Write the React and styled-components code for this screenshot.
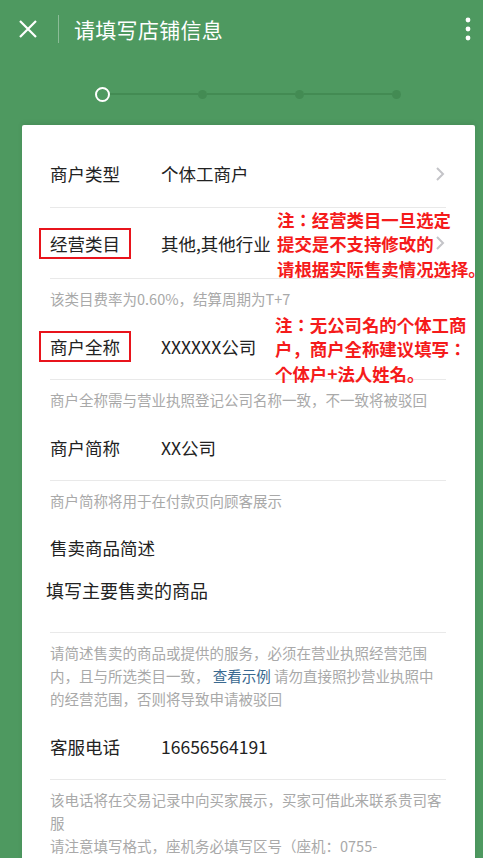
import styled, { createGlobalStyle } from "styled-components";

const GlobalStyle = createGlobalStyle`
    *, *::before, *::after {
        box-sizing: border-box;
    }
    html, body {
        margin: 0;
        padding: 0;
        height: 858px;
        overflow: hidden;
        background: #4e9960;
    }
    body {
        font-family: "Noto Sans CJK SC", "Noto Sans", sans-serif;
    }
`

const Page = styled.div`
    width: 483px;
    min-height: 858px;
    background: #4e9960;
`

const Header = styled.header`
    display: flex;
    align-items: center;
    height: 58px;
    padding: 0 12px 0 18px;
    color: #fff;
`

const IconButton = styled.div`
    display: flex;
    align-items: center;
    justify-content: center;
`

const Divider = styled.div`
    width: 1px;
    height: 28px;
    margin: 0 15px 0 20px;
    background: rgba(255, 255, 255, 0.35);
`

const Title = styled.h1`
    flex: 1;
    margin: 0;
    font-size: 21px;
    font-weight: 400;
    letter-spacing: 0.3px;
`

const Stepper = styled.div`
    display: flex;
    align-items: center;
    width: 306px;
    height: 16px;
    margin: 28px 0 23px 95px;
`

const StepDot = styled.span`
    flex: none;
    border-radius: 50%;
    width: ${p => (p.$active ? "15px" : "9px")};
    height: ${p => (p.$active ? "15px" : "9px")};
    border: ${p => (p.$active ? "2.5px solid #fff" : "none")};
    background: ${p => (p.$active ? "#4e9960" : "#438b53")};
`

const StepLine = styled.span`
    flex: 1;
    height: 2px;
    background: #438b53;
`

const Card = styled.main`
    margin: 0 8px 0 22px;
    padding: 15px 29px 0 28px;
    background: #fff;
    border-radius: 2px 2px 0 0;
    box-shadow: 0 -2px 5px rgba(0, 0, 0, 0.08);
`

const Row = styled.div`
    position: relative;
    display: grid;
    grid-template-columns: 111px 1fr auto;
    align-items: center;
    height: ${p => p.$h || 67}px;
    border-bottom: 1px solid #e9e9e9;
    font-size: 17.5px;
    color: #222;
`

const Label = styled.span`
    justify-self: start;
    line-height: 25px;
    ${p => p.$boxed && `
        border: 2px solid #e8141c;
        padding: 1px 9px;
        margin-left: -11px;
    `}
`

const Value = styled.span`
    line-height: 25px;
`

const Chevron = styled.svg`
    margin-right: 1px;
`

const Hint = styled.p`
    margin: 0;
    padding: 8px 0 3px;
    font-size: 14.5px;
    line-height: 23px;
    color: #a9a9a9;
`

const Link = styled.span`
    color: #3a6990;
`

const Note = styled.div`
    position: absolute;
    top: 0;
    left: ${p => p.$left}px;
    font-family: "Noto Sans CJK JP", "Noto Sans CJK SC", sans-serif;
    font-size: 17.4px;
    line-height: 24.3px;
    font-weight: 700;
    color: #f51b1b;
    white-space: nowrap;
`

const SectionTitle = styled.div`
    padding-top: 21px;
    font-size: 17.5px;
    line-height: 24px;
    color: #222;
`

const Field = styled.div`
    height: 73px;
    padding-top: 17px;
    border-bottom: 1px solid #e9e9e9;
`

const Textarea = styled.textarea`
    display: block;
    width: calc(100% + 4px);
    height: 55px;
    margin: 0 0 0 -4px;
    padding: 0;
    border: none;
    outline: none;
    resize: none;
    font-family: inherit;
    font-size: 18px;
    line-height: 26px;
    color: #222;

    &::placeholder {
        color: #222;
    }
`

const ArrowRight = () => (
    <Chevron width="10" height="16" viewBox="0 0 10 16">
        <polyline points="2,2 8,8 2,14" fill="none" stroke="#c4c4c8" strokeWidth="2" />
    </Chevron>
)

const App = () => {
    return (
        <Page>
            <GlobalStyle />
            <Header>
                <IconButton>
                    <svg width="20" height="20" viewBox="0 0 20 20">
                        <path d="M2 2 L18 18 M18 2 L2 18" stroke="#fff" strokeWidth="2.2" />
                    </svg>
                </IconButton>
                <Divider />
                <Title>请填写店铺信息</Title>
                <IconButton>
                    <svg width="6" height="24" viewBox="0 0 6 24">
                        <circle cx="3" cy="3" r="2.4" fill="#fff" />
                        <circle cx="3" cy="12" r="2.4" fill="#fff" />
                        <circle cx="3" cy="21" r="2.4" fill="#fff" />
                    </svg>
                </IconButton>
            </Header>

            <Stepper>
                <StepDot $active />
                <StepLine />
                <StepDot />
                <StepLine />
                <StepDot />
                <StepLine />
                <StepDot />
            </Stepper>

            <Card>
                <Row $h={68}>
                    <Label>商户类型</Label>
                    <Value>个体工商户</Value>
                    <ArrowRight />
                </Row>
                <Row $h={71}>
                    <Label $boxed>经营类目</Label>
                    <Value>其他,其他行业</Value>
                    <ArrowRight />
                    <Note $left={227}>
                        注：经营类目一旦选定<br />
                        提交是不支持修改的<br />
                        请根据实际售卖情况选择。
                    </Note>
                </Row>
                <Hint>该类目费率为0.60%，结算周期为T+7</Hint>
                <Row>
                    <Label $boxed>商户全称</Label>
                    <Value>XXXXXX公司</Value>
                    <Note $left={225}>
                        注：无公司名的个体工商<br />
                        户，商户全称建议填写：<br />
                        个体户+法人姓名。
                    </Note>
                </Row>
                <Hint>商户全称需与营业执照登记公司名称一致，不一致将被驳回</Hint>
                <Row>
                    <Label>商户简称</Label>
                    <Value>XX公司</Value>
                </Row>
                <Hint>商户简称将用于在付款页向顾客展示</Hint>

                <SectionTitle>售卖商品简述</SectionTitle>
                <Field>
                    <Textarea placeholder="填写主要售卖的商品" />
                </Field>
                <Hint>
                    请简述售卖的商品或提供的服务，必须在营业执照经营范围内，且与所选类目一致， <Link>查看示例</Link> 请勿直接照抄营业执照中的经营范围，否则将导致申请被驳回
                </Hint>

                <Row>
                    <Label>客服电话</Label>
                    <Value>16656564191</Value>
                </Row>
                <Hint>
                    该电话将在交易记录中向买家展示，买家可借此来联系贵司客服<br />
                    请注意填写格式，座机务必填写区号（座机：0755-<wbr />88886666）
                </Hint>
            </Card>
        </Page>
    )
}

export default App
